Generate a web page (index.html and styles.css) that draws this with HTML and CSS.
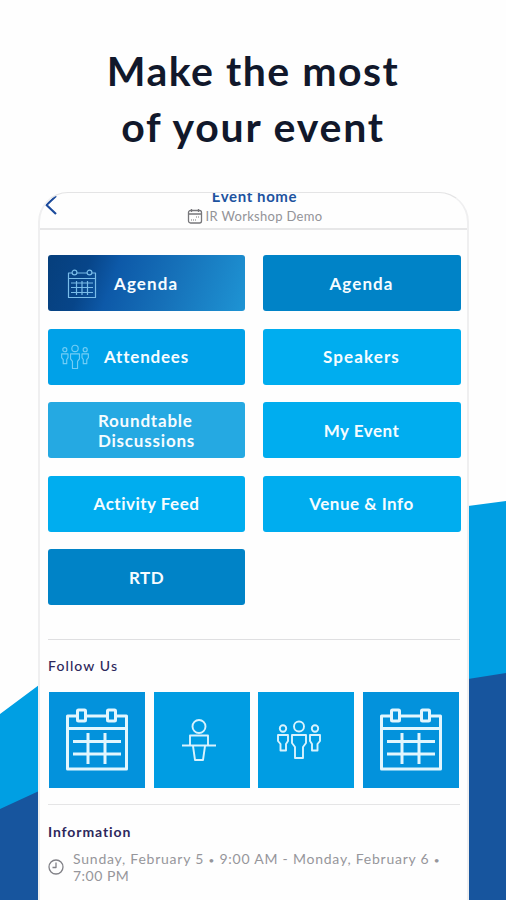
FILE: index.html
```
<!DOCTYPE html>
<html lang="en">

<head>
    <meta charset="UTF-8">
    <meta name="viewport" content="width=device-width, initial-scale=1.0">
    <title>Event home</title>
    <link rel="stylesheet" href="styles.css">
</head>

<body>
    <!-- icons used more than once -->
    <svg class="sprite">
        <symbol id="calendar" viewBox="0 0 64 64">
            <path d="M12 8H2.500V61H61.500V8H51M21 8H42M2.500 20.500H61.500M8 33.500H56M8 46H56M23 25V56M40 25V56" />
            <rect x="12.500" y="2" width="8" height="11" rx="1" />
            <rect x="42.500" y="2" width="8" height="11" rx="1" />
        </symbol>
        <symbol id="calendar-small" viewBox="0 0 30 30">
            <path d="M5 4H1.500V28.500H28.500V4H25M10 4H20M1.500 9.500H28.500M4 14H26M4 18.500H26M4 23.500H26M9.500 12V26M15 12V26M20.500 12V26" />
            <circle cx="7.500" cy="3.500" r="2.400" />
            <circle cx="22.500" cy="3.500" r="2.400" />
        </symbol>
        <symbol id="people" viewBox="0 0 44 40">
            <circle cx="22" cy="6.500" r="5" />
            <path d="M15 15H29V23L26 27V38H18V27L15 23Z" />
            <circle cx="6" cy="8.500" r="3.200" />
            <path d="M1 15H11V21L9 24V30.500H3.500V24L1 21Z" />
            <circle cx="38" cy="8.500" r="3.200" />
            <path d="M33 15H43V21L40.500 24V30.500H35V24L33 21Z" />
        </symbol>
    </svg>

    <svg class="backdrop" viewBox="0 0 506 900">
        <path fill="#009fe3" d="M0 714L39 685V900H0ZM468 506L506 501V900H468Z" />
        <path fill="#17559e" d="M0 809L39 791V900H0ZM468 679L506 673V900H468Z" />
    </svg>

    <div class="page">
        <h1 class="heading">
            <span class="line1">Make the most</span><br>
            <span class="line2">of your event</span>
        </h1>

        <div class="phone">
            <div class="topbar">
                <svg class="back" viewBox="0 0 14 22"><path d="M12 2L2.500 11L12 20" /></svg>
                <div class="titles">
                    <div class="title">Event home</div>
                    <div class="subtitle">
                        <svg class="small-cal" viewBox="0 0 16 16">
                            <rect x="1.500" y="2.500" width="13" height="12.500" rx="2" />
                            <path d="M1.500 6H14.500M4.500 1V4M11.500 1V4" />
                            <path class="dots" d="M9 9H12M4 12H10" />
                        </svg>
                        <span>IR Workshop Demo</span>
                    </div>
                </div>
            </div>

            <div class="content">
                <div class="buttons">
                    <div class="btn gradient">
                        <svg class="btn-cal"><use href="#calendar-small" /></svg>
                        <span class="agenda">Agenda</span>
                    </div>
                    <div class="btn dark"><span class="agenda">Agenda</span></div>
                    <div class="btn medium">
                        <svg class="btn-people"><use href="#people" /></svg>
                        <span class="attendees">Attendees</span>
                    </div>
                    <div class="btn"><span class="speakers">Speakers</span></div>
                    <div class="btn pale"><span class="round">Roundtable<br>Discussions</span></div>
                    <div class="btn"><span>My Event</span></div>
                    <div class="btn"><span>Activity Feed</span></div>
                    <div class="btn"><span>Venue &amp; Info</span></div>
                    <div class="btn dark"><span>RTD</span></div>
                </div>

                <div class="follow">
                    <h2>Follow Us</h2>
                    <div class="tiles">
                        <div class="tile deep"><svg class="tile-cal"><use href="#calendar" /></svg></div>
                        <div class="tile">
                            <svg class="tile-speaker" viewBox="0 0 34 42">
                                <circle cx="17" cy="7.500" r="6.500" />
                                <path d="M8 26V16.500H26V26M0 26.500H34M11 27L13 41H21L23 27" />
                            </svg>
                        </div>
                        <div class="tile"><svg class="tile-people"><use href="#people" /></svg></div>
                        <div class="tile deep"><svg class="tile-cal"><use href="#calendar" /></svg></div>
                    </div>
                </div>

                <div class="info">
                    <h2>Information</h2>
                    <div class="when">
                        <svg class="clock" viewBox="0 0 16 16">
                            <circle cx="8" cy="8" r="7" />
                            <path d="M8 3.500V8.500H4.500" />
                        </svg>
                        <p>Sunday, February 5 <span class="dot">•</span> 9:00 AM - Monday, February 6 <span class="dot">•</span><br><span class="end">7:00 PM</span></p>
                    </div>
                </div>
            </div>
        </div>
    </div>
</body>

</html>
```
FILE: styles.css
```
* {
    box-sizing: border-box;
}

body {
    margin: 0;
    background-color: #fefefe;
    font-family: Lato, "Open Sans", sans-serif;
}

svg {
    fill: none;
    stroke-linejoin: round;
    flex-shrink: 0;
}

.sprite {
    position: absolute;
    width: 0;
    height: 0;
}

.backdrop {
    position: absolute;
    top: 0;
    left: 0;
    width: 506px;
    height: 900px;
}

.page {
    position: relative;
    height: 900px;
    overflow: hidden;
    display: flex;
    flex-direction: column;
}

.heading {
    height: 192px;
    margin: 0;
    padding-top: 43px;
    flex-shrink: 0;
    text-align: center;
    font-size: 41px;
    font-weight: 700;
    line-height: 56px;
    color: #11182b;
    white-space: nowrap;
}

.line1 {
    letter-spacing: 1.5px;
}

.line2 {
    letter-spacing: 1.8px;
}

.phone {
    width: 431px;
    height: 708px;
    margin-left: 38px;
    flex-shrink: 0;
    background-color: #fefefe;
    border: 2px solid #efeff0;
    border-top: 1px solid #e4e4e5;
    border-bottom: 0;
    border-radius: 30px 30px 0 0;
    overflow: hidden;
}

.topbar {
    height: 37px;
    display: flex;
    border-bottom: 2px solid #e7e7e8;
}

.back {
    width: 14px;
    height: 22px;
    margin: 1px 0 0 4px;
    stroke: #1c4b9c;
    stroke-width: 2.200;
}

.titles {
    flex: 1;
    margin-right: 16px;
    text-align: center;
}

.title {
    height: 20px;
    margin-top: -7.500px;
    margin-bottom: 1px;
    line-height: 20px;
    font-size: 15px;
    font-weight: 700;
    letter-spacing: .6px;
    color: #1d539f;
}

.subtitle {
    display: flex;
    justify-content: center;
    align-items: center;
    gap: 3px;
    line-height: 18px;
    font-size: 13px;
    letter-spacing: .3px;
    color: #939398;
}

.small-cal {
    width: 16px;
    height: 16px;
    stroke: #77777b;
    stroke-width: 1.3;
}

.dots {
    stroke-dasharray: 1 1;
    stroke-width: 1;
}

.content {
    padding: 25px 7px 0 8px;
}

.buttons {
    display: grid;
    grid-template-columns: 197px 198px;
    grid-auto-rows: 56px;
    gap: 17.500px;
    padding-bottom: 34px;
}

.btn {
    display: flex;
    align-items: center;
    justify-content: center;
    padding-top: 1px;
    border-radius: 3px;
    background-color: #00adef;
    color: #f6fcff;
    font-size: 17px;
    font-weight: 700;
    line-height: 20px;
    letter-spacing: .5px;
}

.dark {
    background-color: #0083c7;
}

.medium {
    background-color: #00a1e8;
}

.pale {
    background-color: #25a9e2;
}

.gradient {
    background-image: linear-gradient(110deg, #063f7c 0%, #074589 20%, #0d59a8 34%, #1671b9 62%, #1e94d4 100%);
}

.gradient,
.medium {
    justify-content: flex-start;
}

.btn-cal {
    width: 30px;
    height: 30px;
    margin: 0 17px 0 19px;
    stroke: #79bce9;
    stroke-width: 1.200;
}

.btn-people {
    width: 28px;
    height: 26px;
    margin: 0 15px 0 13px;
    stroke: #72cdf5;
    stroke-width: 1.800;
}

.agenda {
    letter-spacing: 1.1px;
}

.attendees {
    letter-spacing: .8px;
}

.speakers {
    letter-spacing: 1.1px;
}

.round {
    text-align: left;
    letter-spacing: .8px;
}

h2 {
    margin: 0;
    font-size: 14px;
    line-height: 18px;
    letter-spacing: .9px;
    color: #2d285c;
}

.follow {
    height: 165px;
    padding-top: 17px;
    border-top: 1px solid #dfdfe1;
}

.follow h2 {
    font-weight: 500;
    letter-spacing: 1.1px;
}

.tiles {
    display: flex;
    justify-content: space-between;
    padding: 17px 1px 0;
}

.tile {
    width: 96px;
    height: 96px;
    display: flex;
    align-items: center;
    justify-content: center;
    background-color: #009de3;
    stroke: #d8f2fd;
}

.deep {
    background-color: #0392dc;
}

.tile-cal {
    width: 64px;
    height: 64px;
    stroke-width: 3;
    stroke: #e2f6fe;
}

.tile-speaker {
    width: 34px;
    height: 42px;
    margin-right: 6px;
    stroke-width: 1.900;
}

.tile-people {
    width: 44px;
    height: 40px;
    margin-right: 15px;
    stroke-width: 1.900;
}

.info {
    padding-top: 18px;
    border-top: 1px solid #e5e5e6;
}

.when {
    display: flex;
    align-items: center;
    gap: 9px;
    padding-top: 9px;
}

.clock {
    width: 16px;
    height: 16px;
    stroke: #818187;
    stroke-width: 1.300;
}

.when p {
    margin: 0;
    font-size: 14px;
    line-height: 17px;
    letter-spacing: .77px;
    color: #96969b;
    white-space: nowrap;
}

.dot {
    font-size: 10px;
    line-height: 1;
}

.end {
    letter-spacing: .5px;
}
```
